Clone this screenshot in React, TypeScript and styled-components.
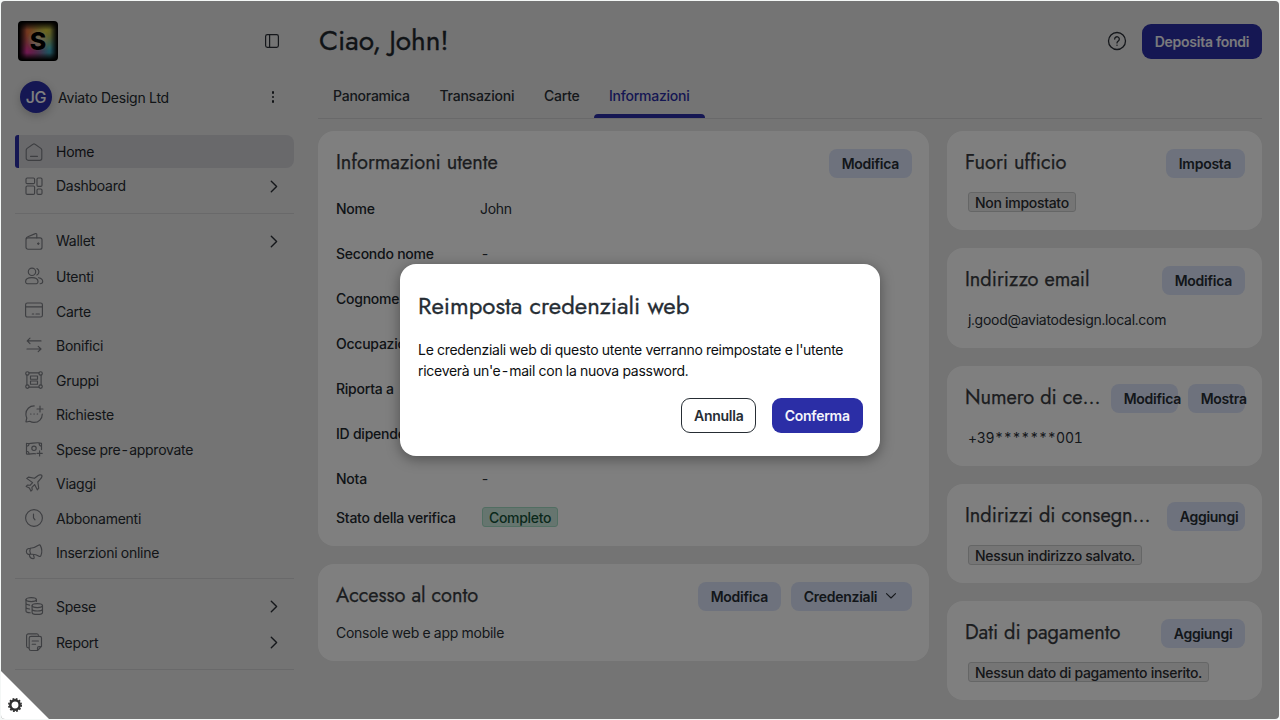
import React from 'react';
import styled, { createGlobalStyle } from 'styled-components';

const GlobalStyle = createGlobalStyle`
  *, *::before, *::after { box-sizing: border-box; }
  html { background: #f4f7f6; }
  body {
    margin: 0;
    overflow: hidden;
    font-family: Inter, 'Liberation Sans', sans-serif;
    font-size: 14px;
    letter-spacing: -0.27px;
    font-variant-numeric: tabular-nums;
    color: #2a3037;
  }
`;

const Window = styled.div`
  position: relative;
  width: 1278px;
  height: 718px;
  margin: 1px;
  border-radius: 4px;
  overflow: hidden;
  display: flex;
  background: #e8e8e8;
`;

/* ---------- Sidebar ---------- */

const Sidebar = styled.aside`
  width: 293px;
  padding: 20px 0 0 14px;
  flex: none;
`;

const Brand = styled.div`
  display: flex;
  justify-content: space-between;
  align-items: center;
  height: 40px;
  padding: 0 14px 0 3px;
`;

const Logo = styled.div`
  width: 40px;
  height: 40px;
  border-radius: 4px;
  display: flex;
  align-items: center;
  justify-content: center;
  font: 800 25px/1 Inter, sans-serif;
  letter-spacing: 0;
  color: #000;
  background:
    linear-gradient(90deg, #000 2%, transparent 22%, transparent 80%, #000 98%),
    linear-gradient(#000 2%, transparent 22%, transparent 80%, #000 98%),
    radial-gradient(circle at 50% 48%, rgba(232, 226, 200, 0.9) 0, transparent 40%),
    radial-gradient(circle at 70% 24%, #d8d03c 0, transparent 50%),
    radial-gradient(circle at 28% 28%, #f0683c 0, transparent 50%),
    radial-gradient(circle at 20% 74%, #e830a8 0, transparent 52%),
    radial-gradient(circle at 80% 66%, #38b8d8 0, transparent 56%),
    #585048;
`;

const Account = styled.div`
  display: flex;
  align-items: center;
  height: 34px;
  margin: 19px 0 21px;
  padding: 0 14px 0 5px;
`;

const AccountName = styled.span`
  flex: 1;
  margin-left: 6px;
  letter-spacing: -0.22px;
  color: #22282e;
`;

const Avatar = styled.div`
  width: 32px;
  height: 32px;
  border-radius: 50%;
  display: flex;
  align-items: center;
  justify-content: center;
  background: #2b2ea6;
  color: #fff;
  font-size: 16px;
  font-weight: 450;
  letter-spacing: -0.3px;
  box-shadow: 0 3px 8px rgba(0, 0, 0, 0.2);
`;

const Dots = styled.div`
  display: flex;
  flex-direction: column;
  gap: 2px;
  margin-right: 6px;

  i { width: 2.4px; height: 2.4px; border-radius: 50%; background: #22272c; }
`;

const NavItem = styled.div<{ $h: number; $active?: boolean }>`
  display: flex;
  align-items: center;
  height: ${(p) => p.$h}px;
  width: 279px;
  padding: 0 16px 0 ${(p) => (p.$active ? 6 : 10)}px;
  color: #262b31;
  ${(p) =>
    p.$active &&
    `background: #d2d2d7; border-left: 4px solid #2b2ea6; border-radius: 3px 8px 8px 3px; color: #1c2127;`}
`;

const NavLabel = styled.span<{ $drop: number; $lift: number }>`
  flex: 1;
  margin-left: 13px;
  padding-top: ${(p) => p.$drop}px;
  padding-bottom: ${(p) => p.$lift}px;
`;

const NavIcon = styled.svg`
  width: 18px;
  height: 18px;
  overflow: visible;
  fill: none;
  stroke: #7c7e84;
  stroke-width: 1.15;
  stroke-linecap: round;
  stroke-linejoin: round;
`;

const Glyph = styled.svg<{ $w?: number }>`
  fill: none;
  stroke: #2a2f36;
  stroke-width: ${(p) => p.$w ?? 1.3};
  stroke-linecap: round;
  stroke-linejoin: round;
  overflow: visible;
  flex: none;
`;

const HelpGlyph = styled(Glyph)`
  margin: -2px 15px 0 0;
`;

const CaretGlyph = styled(Glyph)`
  margin: -3px 0 0 9px;
`;

const Divider = styled.hr<{ $top: number; $bottom: number }>`
  width: 279px;
  height: 1px;
  border: 0;
  margin: ${(p) => p.$top}px 0 ${(p) => p.$bottom}px;
  background: #d2d3d5;
`;

/* ---------- Main ---------- */

const Main = styled.main`
  flex: 1;
  padding: 0 17px 0 24px;
`;

const Header = styled.header`
  display: flex;
  align-items: center;
  height: 35px;
  margin-top: 23px;
`;

const Heading = styled.h1`
  flex: 1;
  margin: 0;
  padding: 0 0 2px 1px;
  font: 400 28px/34px Jost, Lato, sans-serif;
  letter-spacing: -0.1px;
  -webkit-text-stroke: 0.3px currentColor;
  color: #21272d;
`;

const Button = styled.button<{ $kind?: 'primary' | 'outline' | 'soft'; $w: number }>`
  flex: none;
  display: flex;
  align-items: center;
  width: ${(p) => p.$w}px;
  height: ${(p) => ((p.$kind ?? 'soft') === 'soft' ? 29 : 35)}px;
  padding: 1px 0 0 ${(p) => (p.$kind === 'outline' ? 12 : 12.7)}px;
  border: ${(p) => (p.$kind === 'outline' ? '1px solid #262d34' : '0')};
  border-radius: ${(p) => ((p.$kind ?? 'soft') === 'soft' ? 8 : 9)}px;
  background: ${(p) =>
    p.$kind === 'primary' ? '#2b2ea6' : p.$kind === 'outline' ? '#fff' : '#dce5fb'};
  color: ${(p) => (p.$kind === 'primary' ? '#f4f5fb' : '#262d34')};
  font: 600 14px/20px Inter, sans-serif;
  letter-spacing: -0.26px;
  white-space: nowrap;
`;

const Tabs = styled.nav`
  display: flex;
  height: 45px;
  margin-top: 15px;
  border-bottom: 1px solid #d2d3d5;
`;

const Tab = styled.a<{ $w: number; $active?: boolean }>`
  display: flex;
  flex-direction: column;
  justify-content: space-between;
  width: ${(p) => p.$w}px;
  height: 44px;
  padding-top: 12px;
  line-height: 20px;
  font-weight: ${(p) => (p.$active ? 550 : 450)};
  letter-spacing: -0.24px;
  color: ${(p) => (p.$active ? '#2b2ea6' : '#2a3037')};

  span { padding-left: 15px; }

  &::after {
    content: '';
    height: 4px;
    border-radius: 4px 4px 0 0;
    background: ${(p) => (p.$active ? '#2b2ea6' : 'transparent')};
  }
`;

const Columns = styled.div`
  display: flex;
  gap: 18px;
  margin-top: 12px;
`;

const Column = styled.div<{ $w: number }>`
  display: flex;
  flex-direction: column;
  gap: 18px;
  width: ${(p) => p.$w}px;
`;

const Card = styled.section<{ $h: number }>`
  height: ${(p) => p.$h}px;
  padding: 18px 17px 0 18px;
  border-radius: 16px;
  background: #fff;
`;

const CardHead = styled.div`
  display: flex;
  align-items: flex-start;
  justify-content: space-between;
  height: 29px;
`;

const CardTitle = styled.h2`
  margin: 0;
  font: 400 20px/27px Jost, Lato, sans-serif;
  letter-spacing: -0.03px;
  -webkit-text-stroke: 0.25px currentColor;
  color: #383b40;
  white-space: nowrap;
`;

const Actions = styled.div`
  display: flex;
  gap: 10px;
`;

const Fields = styled.div`
  display: flex;
  flex-direction: column;
  padding-top: 8px;
`;

const Row = styled.div<{ $h: number }>`
  display: flex;
  align-items: center;
  height: ${(p) => p.$h}px;
`;

const Term = styled.span`
  width: 144px;
  font-weight: 450;
  letter-spacing: -0.24px;
  color: #22282e;
`;

const Value = styled.span<{ $indent?: number }>`
  margin-left: ${(p) => p.$indent ?? 0}px;
`;

const Badge = styled.span<{ $tone?: 'green' }>`
  display: inline-block;
  height: 20px;
  padding: 0 6px;
  border: 1px solid ${(p) => (p.$tone ? '#a3dcc4' : '#cbcccd')};
  border-radius: 3px;
  background: ${(p) => (p.$tone ? '#cdeade' : '#ebebeb')};
  color: ${(p) => (p.$tone ? '#155239' : '#2a2d31')};
  font-weight: 500;
  letter-spacing: -0.3px;
  line-height: 20px;
`;

const CardBody = styled.div<{ $top: number; $left?: number }>`
  margin: ${(p) => p.$top}px 0 0 ${(p) => p.$left ?? 3}px;
  line-height: 20px;
`;

/* ---------- Overlay ---------- */

const Backdrop = styled.div`
  position: absolute;
  inset: 0;
  display: flex;
  align-items: center;
  justify-content: center;
  background: rgba(0, 0, 0, 0.5);
`;

const Dialog = styled.div`
  width: 480px;
  height: 192px;
  padding: 25px 17px 0 18px;
  border-radius: 16px;
  background: #fff;
  box-shadow: 0 3px 14px rgba(0, 0, 0, 0.38);
`;

const DialogTitle = styled.h3`
  margin: 0;
  font: 400 24px/34px Jost, Lato, sans-serif;
  letter-spacing: -0.02px;
  -webkit-text-stroke: 0.3px currentColor;
  color: #262d34;
`;

const DialogText = styled.p`
  margin: 16px 0 17px;
  line-height: 21px;
  letter-spacing: -0.28px;
  color: #0c0e10;
`;

const DialogActions = styled.div`
  display: flex;
  justify-content: flex-end;
  gap: 16px;
`;

const Corner = styled.div`
  position: absolute;
  left: 0;
  bottom: 0;
  width: 48px;
  height: 48px;
  padding: 27px 0 0 7px;
  background: #fff;
  clip-path: polygon(0 0, 100% 100%, 0 100%);
`;

const Chevron = () => (
  <Glyph width="8" height="13" viewBox="0 0 8 13" $w={1.4}>
    <path d="M1.300 1.200l5.300 5.300-5.300 5.300" />
  </Glyph>
);

const icons: Record<string, React.ReactNode> = {
  Home: <path d="M1.200 7.200c0-.8.300-1.300.9-1.800L8 1.300a1.500 1.500 0 0 1 2 0l5.900 4.100c.6.500.9 1 .9 1.800v8.100a2 2 0 0 1-2 2H3.200a2 2 0 0 1-2-2zM5.500 13.300h7" />,
  Dashboard: (
    <>
      <rect x="1" y="1" width="8.600" height="5.600" rx="1.200" />
      <rect x="1" y="9" width="8.600" height="8.400" rx="1.200" />
      <rect x="12" y="1" width="5" height="8.400" rx="1.200" />
      <rect x="12" y="12" width="5" height="5.400" rx="1.200" />
    </>
  ),
  Wallet: (
    <>
      <rect x="1" y="5.800" width="16" height="11.400" rx="2" />
      <path d="M1.200 6.600c0-1 .7-1.500 1.600-1.800l7.600-3.200c.8-.3 1.400.1 1.400.9v3.300M13.300 10.800v1.600M12.500 11.600h1.600" />
    </>
  ),
  Utenti: (
    <>
      <circle cx="7" cy="4.800" r="3.700" />
      <path d="M.6 14.600c0-2.600 2.600-4 6.200-4s6.200 1.400 6.200 4-1.500 2.100-6.200 2.100-6.200.5-6.200-2.100zM11.900 1.500a3.700 3.700 0 0 1 0 6.600M13.600 10.700c2.500.5 4.100 1.800 4.100 3.800s-.8 2.200-2.600 2.200" />
    </>
  ),
  Carte: (
    <>
      <rect x=".6" y="1" width="16.800" height="14" rx="1.800" />
      <path d="M.6 4.800h16.800M7.300 12h1.400M11 12h3.400" />
    </>
  ),
  Bonifici: <path d="M16 4.900H2.200M5 2.200L2.200 4.900 5 7.600M2 13h14M13.200 10.300L16 13l-2.800 2.700" />,
  Gruppi: (
    <>
      <circle cx="2.400" cy="2.400" r="1.700" />
      <circle cx="15.600" cy="2.400" r="1.700" />
      <circle cx="2.400" cy="15.600" r="1.700" />
      <circle cx="15.600" cy="15.600" r="1.700" />
      <path d="M4.100 1.900h9.800M4.100 16.100h9.800M1.900 4.100v9.800M16.100 4.100v9.800M5.500 5h7v3.200h-7zM5.500 10h7v3.200h-7z" />
    </>
  ),
  Richieste: (
    <path d="M9.200.9C4.500.9.9 4.400.9 9c0 1.600.3 2.800.9 4l-.9 3.800c2 .3 2.800-.5 3.800-.5 1.300.7 2.700 1.100 4.300 1.100 4.700 0 8.300-3.500 8.300-8.400M15 1v6M12 4h6M5.600 9h.4M8.900 9h.4M12.200 9h.4" />
  ),
  'Spese pre-approvate': (
    <>
      <path d="M10.500 13.800c-3.200-.8-6 1-9 .2V3.200c4.600 1.200 9-1.500 15 0v6.400M1.500 6.200c1.600 0 2.500-.9 2.600-2.500M1.500 11.200c1.600 0 2.400.9 2.600 2.600M16.500 6.200c-1.500 0-2.400-1-2.500-3.400M14.600 10.800v5.200M12 13.400h5.200" />
      <circle cx="9" cy="8.300" r="2.200" />
    </>
  ),
  Viaggi: (
    <path d="M1.700 4.400l1.800-1.300 6 1.200 3-2.300c1.500-1.200 3.600-1.400 4.100-.8.600.7.100 2.600-1.300 4l-2.500 2.800.9 6.200-1.400 1.600-2.700-5.200-2.700 2.700.3 2.600-1.300 1.200-1.500-3.200-3.200-1.500 1.200-1.300 2.600.2 2.600-2.700z" />
  ),
  Abbonamenti: (
    <>
      <circle cx="9" cy="9" r="8.400" />
      <path d="M8.500 5v3.800l1.500 2" />
    </>
  ),
  'Inserzioni online': (
    <>
      <path d="M5.400 5.200C9 5 11.400 3.600 13.400 2.200c.8-.6 1.500-.5 2 .4 1.700 3.200 1.700 7 .5 10-.3.9-1.200 1.100-1.900.6-2.200-1.400-4.600-2.300-8.100-1.900-2.900.5-4.500-.6-4.500-2.900s1.300-3.200 4-3.200zM5.400 5.200c-.9 1.800-.8 4.200.3 6.100" />
      <path d="M4.300 11.400c.2 2.400 1.500 4.200 3.800 4.200 1.100 0 1.300-.6.900-1.500l-.6-2.400" />
    </>
  ),
  Spese: (
    <>
      <ellipse cx="6.200" cy="2.600" rx="5.200" ry="2" />
      <ellipse cx="12.300" cy="8.600" rx="5.200" ry="2" />
      <path d="M1 2.600V14c0 1 1.800 1.700 4.200 1.800M1 6.300c0 .8 1.400 1.500 3.600 1.800M1 10.200c0 .8 1.400 1.500 3.600 1.800M11.400 2.600v1.800M7.100 8.600v6.800c0 1.100 2.300 2 5.200 2s5.200-.9 5.200-2V8.600M7.100 12c0 1.100 2.300 2 5.200 2s5.200-.9 5.200-2" />
    </>
  ),
  Report: (
    <path d="M4 14.800H3.400a1.800 1.800 0 0 1-1.800-1.800V2.600A1.800 1.800 0 0 1 3.400.8h8.200a1.800 1.800 0 0 1 1.800 1.400M6 3.300h8.700a1.800 1.800 0 0 1 1.800 1.800v8.300l-4 4.100H6a1.800 1.800 0 0 1-1.800-1.800V5.100A1.800 1.800 0 0 1 6 3.300zM16.400 13.600h-2.400a1.500 1.500 0 0 0-1.500 1.500v2.300M7.200 8h6.200M7.200 11.200h3.400" />
  ),
};

interface ItemProps {
  label: string;
  h: number;
  drop?: number;
  lift?: number;
  active?: boolean;
  expandable?: boolean;
}

const Item = ({ label, h, drop = 0, lift = 0, active, expandable }: ItemProps) => (
  <NavItem $h={h} $active={active}>
    <NavIcon viewBox="0 0 18 18">{icons[label]}</NavIcon>
    <NavLabel $drop={drop} $lift={lift}>{label}</NavLabel>
    {expandable && <Chevron />}
  </NavItem>
);

const flatItems = [
  'Utenti',
  'Carte',
  'Bonifici',
  'Gruppi',
  'Richieste',
  'Spese pre-approvate',
  'Viaggi',
  'Abbonamenti',
  'Inserzioni online',
];

const fields: [string, string][] = [
  ['Secondo nome', '-'],
  ['Cognome', ''],
  ['Occupazione', ''],
  ['Riporta a', ''],
  ['ID dipendente', ''],
  ['Nota', '-'],
];

export default function App() {
  return (
    <>
      <GlobalStyle />
      <Window>
        <Sidebar>
          <Brand>
            <Logo>S</Logo>
            <Glyph width="16" height="16" viewBox="0 0 16 16" $w={1.2}>
              <rect x="1.600" y="1.600" width="12.800" height="12.800" rx="1.800" />
              <path d="M5.600 1.600v12.800" />
            </Glyph>
          </Brand>
          <Account>
            <Avatar>JG</Avatar>
            <AccountName>Aviato Design Ltd</AccountName>
            <Dots>
              <i />
              <i />
              <i />
            </Dots>
          </Account>
          <Item label="Home" h={33} active />
          <Item label="Dashboard" h={36} lift={1} expandable />
          <Divider $top={9} $bottom={9} />
          <Item label="Wallet" h={36} lift={1} expandable />
          {flatItems.map((l) => (
            <Item key={l} label={l} h={34.5} drop={1} />
          ))}
          <Divider $top={8.5} $bottom={9} />
          <Item label="Spese" h={36} expandable />
          <Item label="Report" h={36} expandable />
          <Divider $top={9} $bottom={0} />
        </Sidebar>

        <Main>
          <Header>
            <Heading>Ciao, John!</Heading>
            <HelpGlyph width="20" height="20" viewBox="0 0 20 20" $w={1.3}>
              <circle cx="10" cy="10" r="8.500" />
              <path d="M7.700 8.100a2.300 2.300 0 1 1 3.700 1.800c-.9.7-1.400 1-1.400 2M10 14.100v.2" />
            </HelpGlyph>
            <Button $kind="primary" $w={120}>Deposita fondi</Button>
          </Header>
          <Tabs>
            <Tab $w={106.5}><span>Panoramica</span></Tab>
            <Tab $w={104.5}><span>Transazioni</span></Tab>
            <Tab $w={65}><span>Carte</span></Tab>
            <Tab $w={111} $active><span>Informazioni</span></Tab>
          </Tabs>
          <Columns>
            <Column $w={611}>
              <Card $h={415}>
                <CardHead>
                  <CardTitle>Informazioni utente</CardTitle>
                  <Button $w={83}>Modifica</Button>
                </CardHead>
                <Fields>
                  <Row $h={45}>
                    <Term>Nome</Term>
                    <Value>John</Value>
                  </Row>
                  {fields.map(([name, value]) => (
                    <Row key={name} $h={45}>
                      <Term>{name}</Term>
                      <Value $indent={0.5}>{value}</Value>
                    </Row>
                  ))}
                  <Row $h={32}>
                    <Term>Stato della verifica</Term>
                    <Value $indent={2}>
                      <Badge $tone="green">Completo</Badge>
                    </Value>
                  </Row>
                </Fields>
              </Card>
              <Card $h={97}>
                <CardHead>
                  <CardTitle>Accesso al conto</CardTitle>
                  <Actions>
                    <Button $w={83}>Modifica</Button>
                    <Button $w={121}>
                      Credenziali
                      <CaretGlyph width="10" height="6" viewBox="0 0 10 6" $w={1.1}>
                        <path d="M.5.6L5 5 9.500.6" />
                      </CaretGlyph>
                    </Button>
                  </Actions>
                </CardHead>
                <CardBody $top={12} $left={0}>Console web e app mobile</CardBody>
              </Card>
            </Column>
            <Column $w={315}>
              <Card $h={99}>
                <CardHead>
                  <CardTitle>Fuori ufficio</CardTitle>
                  <Button $w={79}>Imposta</Button>
                </CardHead>
                <CardBody $top={14}>
                  <Badge>Non impostato</Badge>
                </CardBody>
              </Card>
              <Card $h={100}>
                <CardHead>
                  <CardTitle>Indirizzo email</CardTitle>
                  <Button $w={83}>Modifica</Button>
                </CardHead>
                <CardBody $top={15}>j.good@aviatodesign.local.com</CardBody>
              </Card>
              <Card $h={100}>
                <CardHead>
                  <CardTitle>Numero di ce…</CardTitle>
                  <Actions>
                    <Button $w={67}>Modifica</Button>
                    <Button $w={57}>Mostra</Button>
                  </Actions>
                </CardHead>
                <CardBody $top={15}>+39*******001</CardBody>
              </Card>
              <Card $h={99}>
                <CardHead>
                  <CardTitle>Indirizzi di consegn…</CardTitle>
                  <Button $w={78}>Aggiungi</Button>
                </CardHead>
                <CardBody $top={14}>
                  <Badge>Nessun indirizzo salvato.</Badge>
                </CardBody>
              </Card>
              <Card $h={99}>
                <CardHead>
                  <CardTitle>Dati di pagamento</CardTitle>
                  <Button $w={84}>Aggiungi</Button>
                </CardHead>
                <CardBody $top={14}>
                  <Badge>Nessun dato di pagamento inserito.</Badge>
                </CardBody>
              </Card>
            </Column>
          </Columns>
        </Main>

        <Backdrop>
          <Dialog>
            <DialogTitle>Reimposta credenziali web</DialogTitle>
            <DialogText>
              Le credenziali web di questo utente verranno reimpostate e l'utente
              <br />
              riceverà un'e-mail con la nuova password.
            </DialogText>
            <DialogActions>
              <Button $kind="outline" $w={75}>Annulla</Button>
              <Button $kind="primary" $w={91}>Conferma</Button>
            </DialogActions>
          </Dialog>
        </Backdrop>
        <Corner>
          <svg width="14" height="14" viewBox="0 0 14 14" fill="none" stroke="#2f2f2f">
            <circle cx="7" cy="7" r="4.700" strokeWidth="2.500" />
            <circle cx="7" cy="7" r="6.200" strokeWidth="1.600" strokeDasharray="1.800 1.446" />
          </svg>
        </Corner>
      </Window>
    </>
  );
}
